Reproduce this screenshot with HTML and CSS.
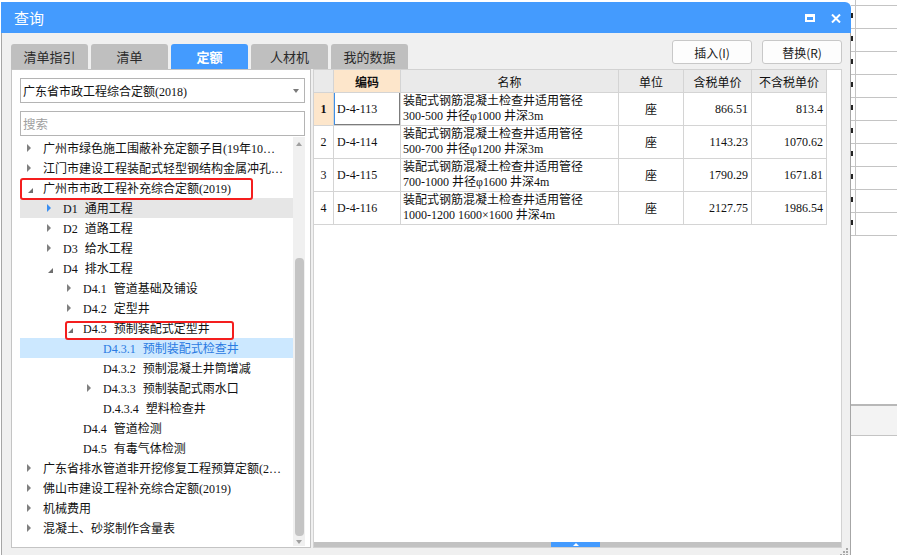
FILE: index.html
```html
<!DOCTYPE html>
<html lang="zh-CN">
<head>
<meta charset="utf-8">
<title>查询</title>
<link rel="stylesheet" href="styles.css">
</head>
<body>
<div class="desk">
  <div class="edge"></div>
  <div class="dlg">
    <div class="titlebar">
      <span class="title">查询</span>
      <div class="winbtns">
        <span class="maxbtn"></span>
        <svg class="closebtn" width="10" height="9" viewBox="0 0 10 9"><path d="M1 0.5 L9 8.5 M9 0.5 L1 8.5" stroke="#fff" stroke-width="2"/></svg>
      </div>
    </div>
    <div class="body">
      <div class="toolbar">
        <div class="tabs">
          <div class="tab">清单指引</div>
          <div class="tab">清单</div>
          <div class="tab active">定额</div>
          <div class="tab">人材机</div>
          <div class="tab">我的数据</div>
        </div>
        <div class="btns">
          <button class="btn">插入(I)</button>
          <button class="btn">替换(R)</button>
        </div>
      </div>
      <div class="panels">
        <div class="lpanel">
          <div class="select"><span class="sel-text">广东省市政工程综合定额(2018)</span><i class="dd"></i></div>
          <div class="search">搜索</div>
          <div class="tree">
            <div class="rows">
              <div class="row l0"><i class="tw c"></i><span class="lbl">广州市绿色施工围蔽补充定额子目(19年10…</span></div>
              <div class="row l0"><i class="tw c"></i><span class="lbl">江门市建设工程装配式轻型钢结构金属冲孔…</span></div>
              <div class="row l0 mark1"><i class="tw e"></i><span class="lbl">广州市市政工程补充综合定额(2019)</span><span class="redbox rb1"></span></div>
              <div class="row l1 hover"><i class="tw c blue"></i><span class="lbl"><span class="cd">D1</span>通用工程</span></div>
              <div class="row l1"><i class="tw c"></i><span class="lbl"><span class="cd">D2</span>道路工程</span></div>
              <div class="row l1"><i class="tw c"></i><span class="lbl"><span class="cd">D3</span>给水工程</span></div>
              <div class="row l1"><i class="tw e"></i><span class="lbl"><span class="cd">D4</span>排水工程</span></div>
              <div class="row l2"><i class="tw c"></i><span class="lbl"><span class="cd">D4.1</span>管道基础及铺设</span></div>
              <div class="row l2"><i class="tw c"></i><span class="lbl"><span class="cd">D4.2</span>定型井</span></div>
              <div class="row l2"><i class="tw e"></i><span class="lbl"><span class="cd">D4.3</span>预制装配式定型井</span><span class="redbox rb2"></span></div>
              <div class="row l3 sel"><i class="tw"></i><span class="lbl"><span class="cd">D4.3.1</span>预制装配式检查井</span></div>
              <div class="row l3"><i class="tw"></i><span class="lbl"><span class="cd">D4.3.2</span>预制混凝土井筒增减</span></div>
              <div class="row l3"><i class="tw c"></i><span class="lbl"><span class="cd">D4.3.3</span>预制装配式雨水口</span></div>
              <div class="row l3"><i class="tw"></i><span class="lbl"><span class="cd">D.4.3.4</span>塑料检查井</span></div>
              <div class="row l2"><i class="tw"></i><span class="lbl"><span class="cd">D4.4</span>管道检测</span></div>
              <div class="row l2"><i class="tw"></i><span class="lbl"><span class="cd">D4.5</span>有毒气体检测</span></div>
              <div class="row l0"><i class="tw c"></i><span class="lbl">广东省排水管道非开挖修复工程预算定额(2…</span></div>
              <div class="row l0"><i class="tw c"></i><span class="lbl">佛山市建设工程补充综合定额(2019)</span></div>
              <div class="row l0"><i class="tw c"></i><span class="lbl">机械费用</span></div>
              <div class="row l0"><i class="tw c"></i><span class="lbl">混凝土、砂浆制作含量表</span></div>
            </div>
            <div class="vscroll">
              <div class="sb-up"><i class="up"></i></div>
              <div class="sb-track"><div class="thumb"></div></div>
              <div class="sb-down"><i class="down"></i></div>
            </div>
          </div>
        </div>
        <div class="rpanel">
          <div class="grid">
            <div class="hd">&nbsp;</div>
            <div class="hd hl b">编码</div>
            <div class="hd">名称</div>
            <div class="hd">单位</div>
            <div class="hd">含税单价</div>
            <div class="hd">不含税单价</div>

            <div class="cell num hl b">1</div>
            <div class="cell code cur">D-4-113</div>
            <div class="cell name">装配式钢筋混凝土检查井适用管径<br>300-500 井径φ1000 井深3m</div>
            <div class="cell unit">座</div>
            <div class="cell price">866.51</div>
            <div class="cell price">813.4</div>

            <div class="cell num">2</div>
            <div class="cell code">D-4-114</div>
            <div class="cell name">装配式钢筋混凝土检查井适用管径<br>500-700 井径φ1200 井深3m</div>
            <div class="cell unit">座</div>
            <div class="cell price">1143.23</div>
            <div class="cell price">1070.62</div>

            <div class="cell num">3</div>
            <div class="cell code">D-4-115</div>
            <div class="cell name">装配式钢筋混凝土检查井适用管径<br>700-1000 井径φ1600 井深4m</div>
            <div class="cell unit">座</div>
            <div class="cell price">1790.29</div>
            <div class="cell price">1671.81</div>

            <div class="cell num">4</div>
            <div class="cell code">D-4-116</div>
            <div class="cell name">装配式钢筋混凝土检查井适用管径<br>1000-1200 1600×1600 井深4m</div>
            <div class="cell unit">座</div>
            <div class="cell price">2127.75</div>
            <div class="cell price">1986.54</div>
          </div>
          <div class="fill"></div>
          <div class="hbar"><span class="hknob"><i class="hup"></i></span></div>
        </div>
      </div>
      <div class="footer">
        <svg class="grip" width="10" height="7" viewBox="0 0 10 7">
          <rect x="7" y="0" width="2" height="2" fill="#a8a8a8"/>
          <rect x="4" y="3" width="2" height="2" fill="#a8a8a8"/>
          <rect x="7" y="3" width="2" height="2" fill="#a8a8a8"/>
          <rect x="1" y="6" width="2" height="2" fill="#a8a8a8"/>
          <rect x="4" y="6" width="2" height="2" fill="#a8a8a8"/>
          <rect x="7" y="6" width="2" height="2" fill="#a8a8a8"/>
        </svg>
      </div>
    </div>
  </div>
  <div class="bgr">
    <div class="grow first"><span class="gcell"></span></div>
    <div class="grow"><i class="tick"></i><span class="gcell"></span></div>
    <div class="grow"><i class="tick"></i><span class="gcell"></span></div>
    <div class="grow"><i class="tick"></i><span class="gcell"></span></div>
    <div class="grow"><i class="tick"></i><span class="gcell"></span></div>
    <div class="grow"><i class="tick"></i><span class="gcell"></span></div>
    <div class="grow"><i class="tick"></i><span class="gcell"></span></div>
    <div class="grow"><i class="tick"></i><span class="gcell"></span></div>
    <div class="grow"><i class="tick"></i><span class="gcell"></span></div>
    <div class="grow"><i class="tick"></i><span class="gcell"></span></div>
    <div class="grow"><i class="tick"></i><span class="gcell"></span></div>
    <div class="band"></div>
  </div>
</div>
</body>
</html>
```

FILE: styles.css
```css
html, body {
  margin: 0;
  padding: 0;
  width: 897px;
  height: 555px;
  overflow: hidden;
  background: #fff;
}
.desk {
  display: flex;
  height: 555px;
  font-family: "Noto Sans CJK SC", sans-serif;
}
.edge {
  width: 1px;
  flex: none;
}
.dlg {
  width: 850px;
  flex: none;
  margin-top: 2px;
  height: 560px;
  display: flex;
  flex-direction: column;
}
.titlebar {
  height: 31px;
  flex: none;
  background: #449bfe;
  border-top-right-radius: 6px;
  display: flex;
  align-items: center;
  padding-left: 13px;
  padding-right: 10px;
}
.title {
  color: #fff;
  font-size: 15px;
  line-height: 31px;
}
.winbtns {
  margin-left: auto;
  display: flex;
  align-items: center;
  gap: 16px;
  padding-top: 1px;
}
.maxbtn {
  width: 10px;
  height: 8px;
  box-sizing: border-box;
  border: 2px solid #fff;
  border-top-width: 3px;
}
.closebtn {
  display: block;
}
.body {
  flex: 1;
  background: #f0f0f0;
  border-left: 1px solid #a6a6a6;
  border-right: 1px solid #a6a6a6;
  display: flex;
  flex-direction: column;
}
.toolbar {
  height: 36px;
  flex: none;
  display: flex;
  padding-left: 9px;
  padding-right: 8px;
}
.tabs {
  display: flex;
  gap: 3px;
  align-self: flex-end;
}
.tab {
  width: 77px;
  height: 25px;
  background: #bfbfbf;
  border-radius: 3px 3px 0 0;
  text-align: center;
  font-size: 13px;
  line-height: 25px;
  color: #2a2a2a;
}
.tab.active {
  background: #449bfe;
  color: #fff;
  font-weight: bold;
}
.btns {
  margin-left: auto;
  display: flex;
  gap: 10px;
  padding-top: 7px;
}
.btn {
  width: 80px;
  height: 24px;
  background: #fdfdfd;
  border: 1px solid #c8c8c8;
  border-radius: 3px;
  font-family: "Noto Sans CJK SC", sans-serif;
  font-size: 12px;
  color: #222;
  padding: 0;
}
.panels {
  height: 479px;
  flex: none;
  display: flex;
  padding-left: 9px;
  padding-right: 8px;
}
.lpanel {
  width: 300px;
  box-sizing: border-box;
  background: #fff;
  border: 1px solid #c4c4c4;
  padding: 8px 5px 0 8px;
  display: flex;
  flex-direction: column;
}
.select, .search {
  height: 25px;
  box-sizing: border-box;
  border: 1px solid #b4b4b4;
  display: flex;
  align-items: center;
  padding-left: 2px;
  flex: none;
}
.sel-text {
  font-family: "Liberation Serif", "Noto Sans CJK SC", serif;
  font-size: 12px;
  color: #111;
}
.dd {
  margin-left: auto;
  margin-right: 5px;
  border-top: 4px solid #7a7a7a;
  border-left: 3.5px solid transparent;
  border-right: 3.5px solid transparent;
}
.search {
  margin-top: 8px;
  font-size: 12.5px;
  color: #a0a0a0;
}
.tree {
  flex: 1;
  display: flex;
  margin-top: 1px;
  margin-bottom: 1px;
  min-height: 0;
}
.rows {
  flex: 1;
  padding-top: 1px;
  overflow: hidden;
  min-width: 0;
}
.row {
  display: flex;
  align-items: center;
  height: 20px;
  white-space: nowrap;
  position: relative;
}
.l1 { padding-left: 20px; }
.l2 { padding-left: 40px; }
.l3 { padding-left: 60px; }
.row.hover { background: #e6e6e6; }
.row.sel { background: #cce8ff; }
.row.sel .lbl { color: #2a7ae2; }
.tw {
  width: 23px;
  height: 20px;
  flex: none;
  box-sizing: border-box;
  padding-left: 7px;
  display: flex;
  align-items: center;
}
.tw.c::before {
  content: "";
  border-left: 4px solid #808080;
  border-top: 4px solid transparent;
  border-bottom: 4px solid transparent;
}
.tw.c.blue::before {
  border-left-color: #3a8ef0;
}
.tw.e::before {
  content: "";
  margin-top: 5px;
  margin-left: 1px;
  border-bottom: 5px solid #6e6e6e;
  border-left: 5px solid transparent;
}
.lbl {
  font-family: "Liberation Serif", "Noto Sans CJK SC", serif;
  font-size: 12px;
  color: #111;
  overflow: hidden;
}
.cd {
  margin-right: 7px;
}
.redbox {
  position: absolute;
  z-index: 2;
  border: 2px solid #f41e1e;
  border-radius: 3px;
  box-sizing: border-box;
  pointer-events: none;
}
.rb1 {
  left: 0;
  top: 0;
  width: 233px;
  height: 22px;
}
.rb2 {
  left: 45px;
  top: 3px;
  width: 169px;
  height: 19px;
}
.vscroll {
  width: 12px;
  flex: none;
  background: #f0f0f0;
  display: flex;
  flex-direction: column;
}
.sb-up, .sb-down {
  height: 14px;
  display: flex;
  align-items: center;
  justify-content: center;
  flex: none;
}
.sb-down { height: 12px; }
.up {
  border-bottom: 4px solid #a0a0a0;
  border-left: 3.5px solid transparent;
  border-right: 3.5px solid transparent;
}
.down {
  border-top: 4px solid #a0a0a0;
  border-left: 3.5px solid transparent;
  border-right: 3.5px solid transparent;
}
.sb-track {
  flex: 1;
  padding-top: 107px;
  display: flex;
  justify-content: center;
}
.thumb {
  width: 9px;
  height: 278px;
  background: #c4c4c4;
  border-radius: 4px;
}
.rpanel {
  flex: 1;
  margin-left: 2px;
  background: #fff;
  border: 1px solid #d2d2d2;
  display: flex;
  flex-direction: column;
}
.grid {
  display: grid;
  grid-template-columns: 20px 67px 218px 65px 68px 75px;
  grid-template-rows: 23px 33px 33px 33px 33px;
  width: 513px;
  font-family: "Liberation Serif", "Noto Sans CJK SC", serif;
  font-size: 12px;
  color: #111;
}
.grid > div {
  box-sizing: border-box;
  border-right: 1px solid #d4d4d4;
  border-bottom: 1px solid #d4d4d4;
  display: flex;
  align-items: center;
  overflow: hidden;
  white-space: nowrap;
}
.hd {
  background: #eaeaea;
  justify-content: center;
  font-family: "Noto Sans CJK SC", sans-serif;
}
.grid > .hl {
  background: #fde6cb;
}
.b { font-weight: bold; }
.num { justify-content: center; }
.code { padding-left: 3px; }
.cur {
  box-shadow: inset 1px 0 0 #3f8fe6, inset -1px -1px 0 #7c7c7c;
}
.name {
  padding-left: 2px;
  line-height: 15px;
}
.unit { justify-content: center; }
.price {
  justify-content: flex-end;
  padding-right: 3px;
}
.fill { flex: 1; }
.hbar {
  height: 5px;
  flex: none;
  background: #c2c2c2;
  padding-left: 237px;
  display: flex;
}
.hknob {
  width: 49px;
  background: #449bfe;
  display: flex;
  justify-content: center;
  align-items: flex-end;
}
.hup {
  border-bottom: 3px solid #fff;
  border-left: 3px solid transparent;
  border-right: 3px solid transparent;
  margin-bottom: 1px;
}
.footer {
  flex: 1;
  display: flex;
  justify-content: flex-end;
  align-items: flex-start;
  padding-right: 1px;
}
.grip {
  display: block;
  margin-top: 0;
}
.bgr {
  flex: 1;
  display: flex;
  flex-direction: column;
}
.grow {
  height: 23px;
  box-sizing: border-box;
  border-bottom: 1px solid #c4c4c4;
  display: flex;
}
.grow.first {
  height: 6px;
  padding-left: 4px;
}
.tick {
  width: 2px;
  height: 5px;
  margin-top: 7px;
  margin-right: 2px;
  background: #222;
  flex: none;
}
.gcell {
  flex: 1;
  border-left: 1px solid #c4c4c4;
}
.band {
  margin-top: 168px;
  height: 32px;
  box-sizing: border-box;
  background: #f3f3f3;
  border-top: 2px solid #b8b8b8;
  border-bottom: 1px solid #c4c4c4;
}
```
